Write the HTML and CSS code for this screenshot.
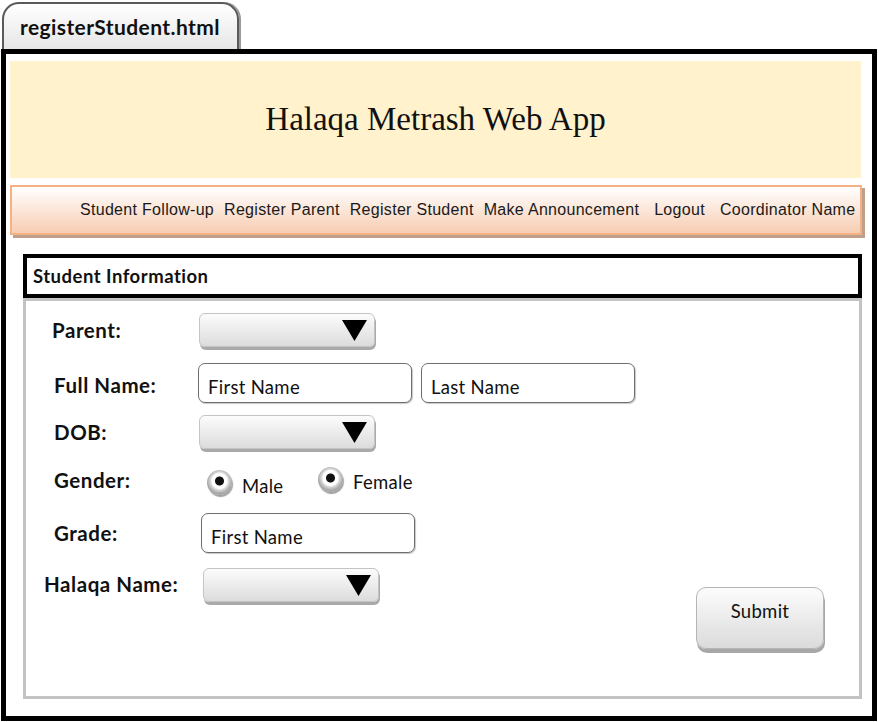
FILE: index.html
```html
<!DOCTYPE html>
<html>
<head>
<meta charset="utf-8">
<title>registerStudent.html</title>
<link rel="stylesheet" href="styles.css">
</head>
<body>
<div class="tab">registerStudent.html</div>
<div class="frame">
  <header class="banner">Halaqa Metrash Web App</header>
  <nav class="nav">
    <span class="nav-item">Student Follow-up</span>
    <span class="nav-item">Register Parent</span>
    <span class="nav-item">Register Student</span>
    <span class="nav-item">Make Announcement</span>
    <span class="nav-item nav-wide">Logout</span>
    <span class="nav-item nav-wide">Coordinator Name</span>
  </nav>
  <div class="section-title">Student Information</div>
  <form class="form-box">
    <div class="row row-parent">
      <label class="label label-parent">Parent:</label>
      <div class="dropdown"><svg class="caret" width="25" height="21" viewBox="0 0 25 21"><polygon points="0,0 25,0 12.5,21" fill="#000"/></svg></div>
    </div>
    <div class="row row-name">
      <label class="label label-name">Full Name:</label>
      <div class="textbox">First Name</div>
      <div class="textbox textbox-last">Last Name</div>
    </div>
    <div class="row row-dob">
      <label class="label label-dob">DOB:</label>
      <div class="dropdown dropdown-tall"><svg class="caret" width="25" height="21" viewBox="0 0 25 21"><polygon points="0,0 25,0 12.5,21" fill="#000"/></svg></div>
    </div>
    <div class="row row-gender">
      <label class="label label-gender">Gender:</label>
      <div class="radio-opt radio-male"><span class="radio"></span><span class="radio-text">Male</span></div>
      <div class="radio-opt radio-female"><span class="radio"></span><span class="radio-text">Female</span></div>
    </div>
    <div class="row row-grade">
      <label class="label label-grade">Grade:</label>
      <div class="textbox">First Name</div>
    </div>
    <div class="row row-halaqa">
      <label class="label label-halaqa">Halaqa Name:</label>
      <div class="dropdown"><svg class="caret" width="25" height="21" viewBox="0 0 25 21"><polygon points="0,0 25,0 12.5,21" fill="#000"/></svg></div>
      <div class="submit">Submit</div>
    </div>
  </form>
</div>
</body>
</html>
```
FILE: styles.css
```css
* { box-sizing: border-box; }
body {
  margin: 0;
  background: #fff;
  font-family: "Lato", "Open Sans", sans-serif;
  color: #111;
}
.tab {
  margin: 2px 0 0 2px;
  width: 237px;
  height: 47px;
  border: 2px solid #5a5a5a;
  border-bottom: 0;
  border-radius: 17px 17px 0 0;
  background: linear-gradient(#ffffff, #e6e6e6);
  box-shadow: 2px 0 0 #9a9a9a;
  font-weight: 700;
  font-size: 21px;
  letter-spacing: 0.4px;
  padding: 11px 0 0 16px;
  line-height: 24px;
  color: #111;
}
.frame {
  margin-left: 1px;
  width: 876px;
  height: 672px;
  border: 5px solid #000;
}
.banner {
  margin: 7px 0 0 4px;
  width: 851px;
  height: 117px;
  background: #fff2cc;
  display: flex;
  align-items: center;
  justify-content: center;
  font-family: "Liberation Serif", serif;
  font-size: 33px;
  color: #111;
}
.nav {
  margin: 7px 0 0 4px;
  width: 852px;
  height: 50px;
  border: 2px solid #f4b183;
  background: linear-gradient(#ffffff, #f7cdb2);
  box-shadow: 3px 3px 0 #c0a08c;
  display: flex;
  align-items: center;
  gap: 10px;
  padding-left: 68px;
  font-family: "Liberation Sans", Arial, sans-serif;
  font-size: 16px;
  letter-spacing: 0.3px;
  color: #1a1a1a;
}
.nav-wide { margin-left: 5px; }
.section-title {
  margin: 19px 0 0 17px;
  width: 839px;
  height: 44px;
  border: 4px solid #000;
  display: flex;
  align-items: center;
  padding-left: 6px;
  font-weight: 700;
  font-size: 18.5px;
  letter-spacing: 0.5px;
}
.form-box {
  margin: 0 0 0 17px;
  width: 839px;
  height: 401px;
  border: 3px solid #c3c3c3;
  display: flex;
  flex-direction: column;
}
.row {
  display: flex;
  align-items: center;
}
.label {
  font-weight: 700;
  font-size: 20.5px;
  letter-spacing: 0.55px;
  color: #111;
}
.row-parent { margin-top: 12px; }
.label-parent { margin-left: 26px; width: 147px; }
.row-name { margin-top: 16px; }
.label-name { margin-left: 28px; width: 144px; padding-top: 4px; }
.row-dob { margin-top: 12px; }
.label-dob { margin-left: 28px; width: 145px; }
.dropdown-tall { height: 36px; }
.row-gender { margin-top: 16px; align-items: flex-start; height: 30px; }
.label-gender { margin-left: 28px; width: 153px; line-height: 24px; padding-top: 3px; }
.row-grade { margin-top: 18px; }
.label-grade { margin-left: 28px; width: 147px; }
.row-halaqa { margin-top: 15px; align-items: flex-start; }
.label-halaqa { margin-left: 18px; width: 159px; margin-top: 4px; }

.dropdown {
  position: relative;
  width: 176px;
  height: 34px;
  border: 1px solid #c4c4c4;
  border-radius: 6px;
  background: linear-gradient(#fcfcfc, #dcdcdc);
  box-shadow: 1px 3px 0 #a9a9a9;
  display: flex;
  align-items: center;
  justify-content: flex-end;
  padding-right: 7px;
}
.caret { display: block; }

.textbox {
  width: 214px;
  height: 40px;
  border: 1.5px solid #6e6e6e;
  border-radius: 7px;
  background: #fff;
  box-shadow: 1px 1px 1px #c8c8c8;
  display: flex;
  align-items: center;
  padding: 7px 0 0 9px;
  font-size: 18.5px;
  letter-spacing: 0.3px;
  color: #111;
}
.textbox-last { margin-left: 9px; }

.radio-opt {
  display: flex;
  align-items: center;
}
.radio {
  display: block;
  flex: none;
  width: 25px;
  height: 25px;
  border-radius: 50%;
  background: radial-gradient(circle at 50% 44%, #111 0, #111 4px, #fff 5px, #fff 7.5px, #d8d8d8 9px, #a5a5a5 12.5px);
  box-shadow: 1px 2px 1px #a0a0a0;
}
.radio-text {
  font-size: 18.5px;
  letter-spacing: 0.3px;
  margin-left: 10px;
}
.radio-male { margin-top: 2px; width: 111px; }
.radio-male .radio-text { padding-top: 8px; }
.radio-female { margin-top: 0; }
.radio-female .radio-text { padding-top: 6px; }

.submit {
  margin: 19px 0 0 auto;
  margin-right: 35px;
  width: 128px;
  height: 62px;
  border: 1px solid #b5b5b5;
  border-radius: 10px;
  background: linear-gradient(#fcfcfc, #dbdbdb);
  box-shadow: 1px 4px 0 #a8a8a8;
  text-align: center;
  padding-top: 11px;
  line-height: 24px;
  font-size: 18.5px;
  letter-spacing: 0.3px;
  color: #111;
}
```
